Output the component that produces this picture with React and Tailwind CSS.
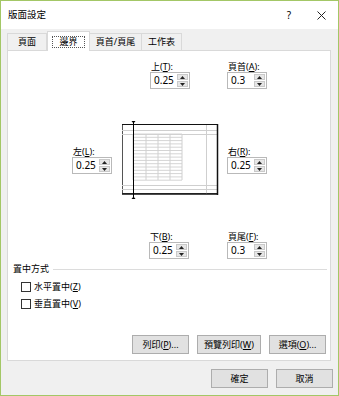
import React from "react";

const FONT = { fontFamily: '"Noto Sans", "Noto Sans CJK TC", sans-serif' };

function Tri({ up }) {
  return (
    <svg width="5" height="3" viewBox="0 0 5 3">
      {up ? <polygon points="0,3 5,3 2.5,0" fill="#222" /> : <polygon points="0,0 5,0 2.5,3" fill="#222" />}
    </svg>
  );
}

function Spin({ value }) {
  return (
    <div className="flex h-[17px] w-[40px] border border-[#b9b9b9] bg-white">
      <div className="flex-1 pl-[3px] text-[10px] leading-[15px] text-black">{value}</div>
      <div className="flex w-[12px] flex-col gap-px py-px pr-px">
        <div className="flex flex-1 items-center justify-center border border-[#c9c9c9] bg-[#e6e6e6]">
          <Tri up />
        </div>
        <div className="flex flex-1 items-center justify-center border border-[#c9c9c9] bg-[#e6e6e6]">
          <Tri />
        </div>
      </div>
    </div>
  );
}

function Field({ label, k, value, className = "" }) {
  return (
    <div className={"flex flex-col " + className}>
      <div className="h-[11px] pl-px text-[9px] leading-[11px]">
        {label}(<u>{k}</u>):
      </div>
      <Spin value={value} />
    </div>
  );
}

function Preview() {
  const rows = [];
  for (let i = 0; i <= 14; i++) {
    const y = 14 + i * 3.3;
    rows.push(<line key={"r" + i} x1="13" y1={y} x2="62" y2={y} stroke="#d4d4d4" strokeWidth="1" />);
  }
  const cols = [13, 26, 38, 50, 62].map((x, i) => (
    <line key={"c" + i} x1={x} y1="14" x2={x} y2="60" stroke="#d0d0d0" strokeWidth="1" />
  ));
  return (
    <svg width="100" height="80" viewBox="0 0 100 80" className="block">
      <rect x="2.5" y="4.5" width="95" height="69" fill="#fff" stroke="#555" strokeWidth="1" />
      <line x1="2" y1="10.5" x2="98" y2="10.5" stroke="#cfcfcf" />
      <line x1="2" y1="14.5" x2="98" y2="14.5" stroke="#cfcfcf" />
      <line x1="2" y1="65.5" x2="98" y2="65.5" stroke="#cfcfcf" />
      <line x1="2" y1="69.5" x2="98" y2="69.5" stroke="#cfcfcf" />
      <line x1="86.5" y1="4" x2="86.5" y2="74" stroke="#cfcfcf" />
      {rows}
      {cols}
      <line x1="97.5" y1="4" x2="97.5" y2="75" stroke="#111" strokeWidth="1.5" />
      <line x1="2" y1="74" x2="98" y2="74" stroke="#111" strokeWidth="1.5" />
      <line x1="2" y1="4.5" x2="98" y2="4.5" stroke="#111" strokeWidth="1" />
      <line x1="13.5" y1="2" x2="13.5" y2="77" stroke="#000" strokeWidth="1" />
      <polygon points="11.5,1 15.5,1 13.5,3.5" fill="#000" />
      <polygon points="11.5,79 15.5,79 13.5,76.5" fill="#000" />
    </svg>
  );
}

function Btn({ children, className = "" }) {
  return (
    <div
      className={
        "flex h-[19px] items-center justify-center border border-[#adadad] bg-[#e1e1e1] text-[9px] text-black " +
        className
      }
    >
      {children}
    </div>
  );
}

function Check({ label, k }) {
  return (
    <div className="flex h-[17px] items-center">
      <div className="h-[10px] w-[10px] border border-[#333] bg-white" />
      <div className="ml-[3px] text-[9px] leading-[11px]">
        {label}(<u>{k}</u>)
      </div>
    </div>
  );
}

export default function App() {
  return (
    <div
      style={FONT}
      className="flex h-[396px] w-[339px] flex-col border border-[#a3c766] bg-[#f0f0f0] text-black"
    >
      {/* title bar */}
      <div className="flex h-[28px] items-center bg-white pl-[7px] pr-[12px]">
        <div className="text-[9.5px]">版面設定</div>
        <div className="ml-auto text-[10px]">?</div>
        <svg width="9" height="9" viewBox="0 0 9 9" className="ml-[26px]">
          <path d="M0.5 0.5 L8.5 8.5 M8.5 0.5 L0.5 8.5" stroke="#222" strokeWidth="1" />
        </svg>
      </div>

      {/* tabs */}
      <div className="mt-[2px] flex items-end pl-[6px]">
        <div className="flex h-[17px] w-[40px] items-center justify-center border border-b-0 border-[#d9d9d9] bg-[#f0f0f0] text-[9px]">
          頁面
        </div>
        <div className="relative z-10 -mb-px flex h-[20px] w-[43px] items-center justify-center border border-b-0 border-[#d9d9d9] bg-white text-[9px]">
          <div className="border border-dotted border-[#555] px-[6px] leading-[10px]">邊界</div>
        </div>
        <div className="flex h-[17px] w-[52px] items-center justify-center border border-b-0 border-l-0 border-[#d9d9d9] bg-[#f0f0f0] text-[9px]">
          頁首/頁尾
        </div>
        <div className="flex h-[17px] w-[40px] items-center justify-center border border-b-0 border-l-0 border-[#d9d9d9] bg-[#f0f0f0] text-[9px]">
          工作表
        </div>
      </div>

      {/* panel */}
      <div className="ml-[6px] flex h-[311px] w-[324px] flex-col border border-[#d9d9d9] bg-white pb-[6px]">
        {/* top row */}
        <div className="mt-[10px] flex pl-[142px]">
          <Field label="上" k="T" value="0.25" className="w-[77px]" />
          <Field label="頁首" k="A" value="0.3" />
        </div>

        {/* middle row */}
        <div className="mt-[31px] flex items-center pl-[64px]">
          <Field label="左" k="L" value="0.25" className="w-[48px]" />
          <Preview />
          <Field label="右" k="R" value="0.25" className="ml-[7px]" />
        </div>

        {/* bottom row */}
        <div className="mt-[31px] flex pl-[141px]">
          <Field label="下" k="B" value="0.25" className="w-[78px]" />
          <Field label="頁尾" k="F" value="0.3" />
        </div>

        {/* section */}
        <div className="mt-[4px] flex items-center pl-[5px] pr-[3px]">
          <div className="text-[9px] leading-[12px]">置中方式</div>
          <div className="ml-[4px] h-px flex-1 bg-[#dcdcdc]" />
        </div>
        <div className="mt-[3px] flex flex-col pl-[13px]">
          <Check label="水平置中" k="Z" />
          <Check label="垂直置中" k="V" />
        </div>

        <div className="mt-auto flex justify-end gap-[8px] pr-[4px]">
          <Btn className="w-[57px]">
            列印(<u>P</u>)...
          </Btn>
          <Btn className="w-[64px]">
            預覽列印(<u>W</u>)
          </Btn>
          <Btn className="w-[57px]">
            選項(<u>O</u>)...
          </Btn>
        </div>
      </div>

      {/* dialog buttons */}
      <div className="mt-[8px] flex justify-end gap-[8px] pr-[5px]">
        <Btn className="w-[57px] border-[#0078d7]">確定</Btn>
        <Btn className="w-[57px]">取消</Btn>
      </div>
    </div>
  );
}
